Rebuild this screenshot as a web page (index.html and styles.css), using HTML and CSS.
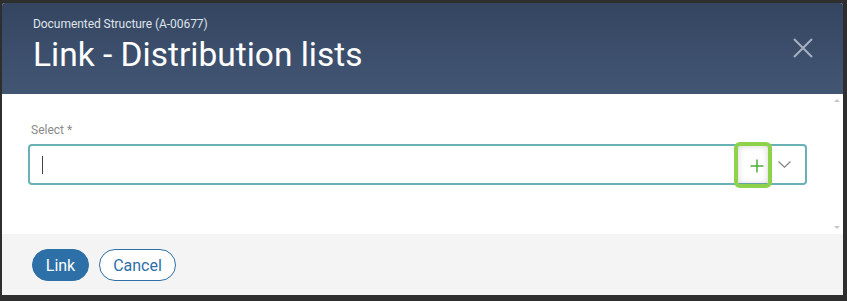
FILE: index.html
```html
<!DOCTYPE html>
<html lang="en">
<head>
<meta charset="utf-8">
<title>Link - Distribution lists</title>
<link rel="stylesheet" href="styles.css">
</head>
<body>
<div class="dialog">
  <header class="dlg-header">
    <div class="titles">
      <div class="subtitle">Documented Structure (A-00677)</div>
      <h1 class="title">Link - Distribution lists</h1>
    </div>
    <button class="close" aria-label="Close">
      <svg width="20" height="20" viewBox="0 0 20 20"><path d="M1 1 L19 19 M19 1 L1 19" stroke="#a7b1c0" stroke-width="2" fill="none"/></svg>
    </button>
  </header>
  <main class="dlg-body">
    <label class="field-label">Select *</label>
    <div class="select">
      <span class="caret"></span>
      <span class="spacer"></span>
      <span class="add-btn">
        <svg width="14" height="14" viewBox="0 0 14 14"><path d="M7 0.5 V13.5 M0.5 7 H13.5" stroke="#4caf3a" stroke-width="1.5" fill="none"/></svg>
      </span>
      <span class="chev">
        <svg width="13" height="7" viewBox="0 0 13 7"><path d="M0.5 0.5 L6.5 6.2 L12.5 0.5" stroke="#8a8a8a" stroke-width="1.3" fill="none"/></svg>
      </span>
    </div>
    <span class="scroll-up"></span>
    <span class="scroll-down"></span>
  </main>
  <footer class="dlg-footer">
    <button class="btn btn-primary">Link</button>
    <button class="btn btn-secondary">Cancel</button>
  </footer>
</div>
</body>
</html>
```
FILE: styles.css
```css
html, body {
  margin: 0;
  padding: 0;
  background: #2e2e2e;
  font-family: Roboto, "Liberation Sans", Arial, sans-serif;
}
body {
  width: 847px;
  height: 301px;
  overflow: hidden;
}
.dialog {
  margin: 3px 0 0 2px;
  width: 841px;
  height: 292px;
  display: flex;
  flex-direction: column;
  background: #fff;
  border-radius: 3px 3px 0 0;
  overflow: hidden;
}
.dlg-header {
  height: 91px;
  flex: none;
  background: linear-gradient(180deg, #344560 0%, #425674 100%);
  display: flex;
  justify-content: space-between;
  align-items: flex-start;
  padding: 0 30px 0 31px;
  box-sizing: border-box;
}
.titles {
  padding-top: 13px;
}
.subtitle {
  color: #dfe3ea;
  font-size: 12px;
  line-height: 16px;
  letter-spacing: -0.05px;
}
.title {
  margin: 3px 0 0 0;
  color: #ffffff;
  font-weight: 400;
  font-size: 33.5px;
  line-height: 40px;
}
.close {
  margin-top: 35px;
  background: none;
  border: 0;
  padding: 0;
  width: 20px;
  height: 20px;
  display: block;
}
.close svg { display: block; }
.dlg-body {
  position: relative;
  height: 140px;
  flex: none;
  padding: 29px 36px 0 26px;
  box-sizing: border-box;
}
.field-label {
  display: block;
  color: #8a8a8a;
  font-size: 12px;
  line-height: 14px;
  margin-left: 3px;
}
.select {
  margin-top: 7px;
  height: 41px;
  box-sizing: border-box;
  border: 2px solid #6ab1b6;
  border-radius: 4px;
  display: flex;
  align-items: center;
  padding: 0 14px 0 12px;
}
.caret {
  width: 1px;
  height: 18px;
  background: #444;
}
.spacer { flex: 1; }
.add-btn {
  flex: none;
  width: 38px;
  height: 46px;
  box-sizing: border-box;
  border: 4px solid #8ed14b;
  border-radius: 6px;
  box-shadow: inset 0 0 6px rgba(0,0,0,0.18);
  display: flex;
  align-items: center;
  justify-content: center;
  margin-right: 6px;
}
.add-btn svg { display: block; margin-left: 8px; margin-top: 2px; }
.chev { display: flex; align-items: center; flex: none; }
.chev svg { display: block; }
.scroll-up, .scroll-down {
  position: absolute;
  right: 3px;
  width: 0;
  height: 0;
  border-left: 3px solid transparent;
  border-right: 3px solid transparent;
}
.scroll-up {
  top: 5px;
  border-bottom: 3px solid #c8c8c8;
}
.scroll-down {
  bottom: 5px;
  border-top: 3px solid #c8c8c8;
}
.dlg-footer {
  flex: 1;
  background: #f4f4f4;
  display: flex;
  align-items: flex-start;
  gap: 10px;
  padding: 15px 0 0 30px;
}
.btn {
  height: 32px;
  border-radius: 16px;
  font-family: Roboto, "Liberation Sans", Arial, sans-serif;
  font-size: 16px;
  padding: 0;
  box-sizing: border-box;
}
.btn-primary {
  width: 57px;
  background: #2d6fa7;
  color: #fff;
  border: 1px solid #2d6fa7;
}
.btn-secondary {
  width: 77px;
  background: #fff;
  color: #2d6fa7;
  border: 1px solid #2d6fa7;
}
```
